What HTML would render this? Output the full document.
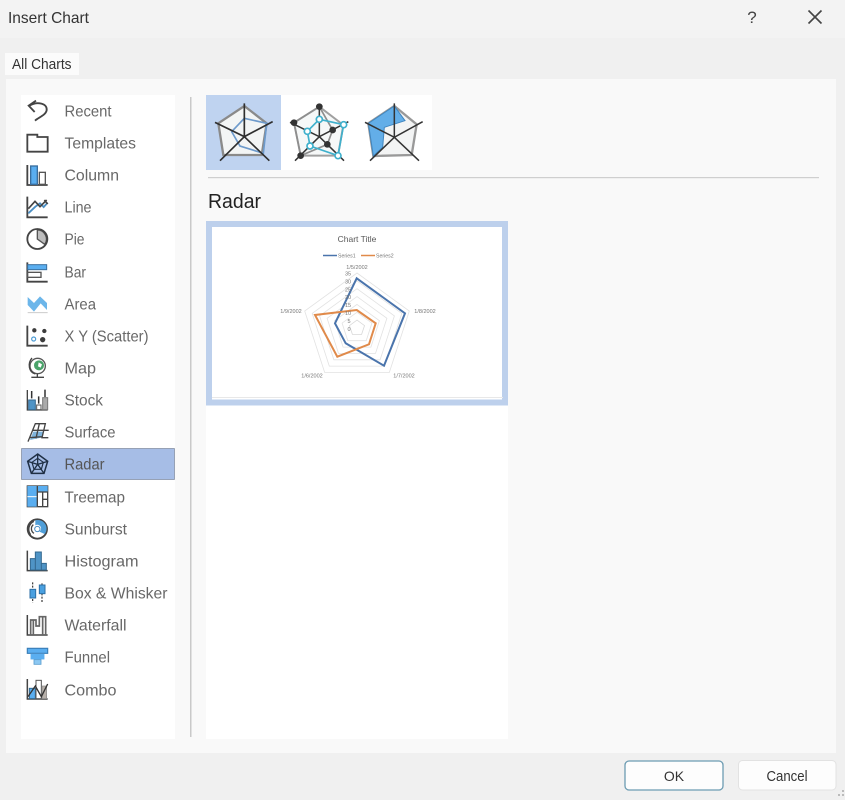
<!DOCTYPE html>
<html><head><meta charset="utf-8"><title>Insert Chart</title>
<style>
html,body{margin:0;padding:0;background:#f0f0f0;width:845px;height:800px;overflow:hidden}
svg{display:block;filter:blur(.3px)}
text{font-family:"Liberation Sans",sans-serif}
.l{font-size:16px;fill:#686868}
.i{fill:none;stroke:#444;stroke-width:5.500}
.c{font-size:5.500px;fill:#777}
</style></head><body>
<svg width="845" height="800" viewBox="0 0 845 800" xmlns="http://www.w3.org/2000/svg">
<rect width="845" height="800" fill="#f0f0f0"/>
<rect width="845" height="38" fill="#f3f3f3"/>
<text x="8" y="23" font-size="16" fill="#333" textLength="81" lengthAdjust="spacingAndGlyphs">Insert Chart</text>
<text x="752" y="23" font-size="17" fill="#444" text-anchor="middle">?</text>
<path d="M808.500 10.500 L821.500 23.500 M821.500 10.500 L808.500 23.500" stroke="#444" stroke-width="1.600" fill="none"/>
<rect x="6" y="79" width="830" height="674" fill="#f9f9f9"/>
<rect x="5" y="53" width="74" height="22" fill="#fbfbfb"/>
<text x="12" y="69" font-size="14.500" fill="#333" textLength="59.500" lengthAdjust="spacingAndGlyphs">All Charts</text>
<rect x="21" y="95" width="154" height="644" fill="#fff"/>
<rect x="21.500" y="448.500" width="153" height="31" fill="#a6bde6" stroke="#5a6478" stroke-width="1" stroke-dasharray="1 1"/>
<rect x="190" y="97" width="1.500" height="640" fill="#c9c9c9"/>

<g transform="translate(-.5 -.7)">
<text class="l" x="65" y="117" textLength="47" lengthAdjust="spacingAndGlyphs">Recent</text>
<text class="l" x="65" y="149" textLength="71.500" lengthAdjust="spacingAndGlyphs">Templates</text>
<text class="l" x="65" y="181" textLength="54.500" lengthAdjust="spacingAndGlyphs">Column</text>
<text class="l" x="65" y="213" textLength="27" lengthAdjust="spacingAndGlyphs">Line</text>
<text class="l" x="65" y="245" textLength="20" lengthAdjust="spacingAndGlyphs">Pie</text>
<text class="l" x="65" y="278" textLength="21.500" lengthAdjust="spacingAndGlyphs">Bar</text>
<text class="l" x="65" y="310" textLength="31.500" lengthAdjust="spacingAndGlyphs">Area</text>
<text class="l" x="65" y="342" textLength="84" lengthAdjust="spacingAndGlyphs">X Y (Scatter)</text>
<text class="l" x="65" y="374" textLength="31.500" lengthAdjust="spacingAndGlyphs">Map</text>
<text class="l" x="65" y="406" textLength="38.500" lengthAdjust="spacingAndGlyphs">Stock</text>
<text class="l" x="65" y="438" textLength="51" lengthAdjust="spacingAndGlyphs">Surface</text>
<text class="l" x="65" y="470" textLength="40" lengthAdjust="spacingAndGlyphs" style="fill:#555">Radar</text>
<text class="l" x="65" y="503" textLength="60.500" lengthAdjust="spacingAndGlyphs">Treemap</text>
<text class="l" x="65" y="535" textLength="62.500" lengthAdjust="spacingAndGlyphs">Sunburst</text>
<text class="l" x="65" y="567" textLength="74" lengthAdjust="spacingAndGlyphs">Histogram</text>
<text class="l" x="65" y="599" textLength="103" lengthAdjust="spacingAndGlyphs">Box &amp; Whisker</text>
<text class="l" x="65" y="631" textLength="62" lengthAdjust="spacingAndGlyphs">Waterfall</text>
<text class="l" x="65" y="663" textLength="45.500" lengthAdjust="spacingAndGlyphs">Funnel</text>
<text class="l" x="65" y="696" textLength="52" lengthAdjust="spacingAndGlyphs">Combo</text>
</g>

<!-- icons, group 1 -->
<g transform="scale(.33333)">
<path class="i" d="M108 302 L86 317 L104 336 M88 317 C112 303 143 310 140 331 C137 346 116 352 105 362"/>
<path class="i" d="M82 404 H112 V411 H143 V455 H82 Z"/>
<path class="i" d="M82 495 V555 H143"/>
<rect x="92" y="498" width="20" height="55" fill="#5aaef0" stroke="#3a6f9f" stroke-width="4"/>
<rect x="118" y="517" width="18" height="36" fill="#fff" stroke="#555" stroke-width="4"/>
<path class="i" d="M82 590 V652 H143"/>
<path d="M85 640 L106 620 L120 610 L131 621 L143 608" fill="none" stroke="#4b8fc4" stroke-width="5.500"/>
<path d="M85 626 L105 604 L120 620 L140 600 M133 600 L143 612" fill="none" stroke="#444" stroke-width="5"/>
<path d="M112 717 V690 A27 27 0 0 1 134 733 Z" fill="#bdbdbd" stroke="#555" stroke-width="4"/>
<circle class="i" cx="112" cy="717" r="30"/>
</g>
<!-- icons, group 2 -->
<g transform="translate(0 255) scale(.33333)">
<path class="i" d="M82 22 V80 H143"/>
<rect x="83" y="29" width="57" height="15" fill="#5aaef0" stroke="#3a6f9f" stroke-width="3"/>
<rect x="83" y="52" width="40" height="15" fill="#fff" stroke="#555" stroke-width="4"/>
<polygon points="83,126 102,144 120,124 141,144 141,165 122,145 102,170 83,150" fill="#6cb6ea"/>
<path d="M83 173 H143" stroke="#ccc" stroke-width="3"/>
<path class="i" d="M82 212 V272 H143"/>
<circle cx="103" cy="226" r="6.500" fill="#3c3c3c"/><circle cx="133" cy="228" r="6.500" fill="#3c3c3c"/><circle cx="128" cy="254" r="8" fill="#3c3c3c"/>
<circle cx="101" cy="252" r="6" fill="#fff" stroke="#4b9bd4" stroke-width="3.500"/>
<circle cx="113" cy="333" r="23" fill="#fff" stroke="#555" stroke-width="4"/>
<circle cx="117" cy="331" r="15" fill="#4aa36a"/>
<path d="M116 322 L126 328 L122 338 L114 334 Z" fill="#fff"/>
<path d="M96 309 C82 325 86 352 106 357 M112 357 V366 M94 367 H132" fill="none" stroke="#444" stroke-width="4"/>
<path d="M82 405 V465 H143" fill="none" stroke="#444" stroke-width="4"/>
<rect x="86" y="435" width="20" height="29" fill="#4f94c6" stroke="#33688f" stroke-width="3"/>
<rect x="110" y="450" width="13" height="14" fill="#fff" stroke="#555" stroke-width="3"/>
<rect x="128" y="428" width="15" height="36" fill="#aaa" stroke="#777" stroke-width="3"/>
<path d="M95 408 V430 M116 424 V446 M135 404 V426" stroke="#333" stroke-width="4.500"/>
<polygon points="100,530 132,530 124,548 90,555" fill="#7fb4dc"/>
<path d="M84 560 L106 506 H136 L126 548 H145 M88 548 L126 545 M98 526 H146 M118 506 L108 550" fill="none" stroke="#444" stroke-width="4"/>
<g fill="none" stroke="#1f2f44">
<polygon points="113,597 143,619 132,655 94,655 83,619" stroke-width="4.500"/>
<polygon points="113,610 130,622 124,643 102,643 96,622" stroke-width="3.500"/>
<path d="M113 597 V628 L143 619 M113 628 L132 655 M113 628 L94 655 M113 628 L83 619" stroke-width="4"/>
</g>
</g>
<!-- icons, group 3 -->
<g transform="translate(0 480) scale(.33333)">
<rect x="82" y="18" width="61" height="62" fill="#fff" stroke="#444" stroke-width="4"/>
<rect x="82" y="18" width="30" height="62" fill="#5aaef0"/>
<rect x="112" y="18" width="31" height="17" fill="#5aaef0"/>
<path d="M82 50 H112" stroke="#fff" stroke-width="3"/>
<path d="M112 18 V80 M112 36 H143 M128 36 V80 M128 58 H143" stroke="#444" stroke-width="4"/>
<circle cx="112" cy="147" r="29" fill="#fff" stroke="#444" stroke-width="5.500"/>
<path d="M106 121 A26 26 0 0 1 134 162 L118 155 A11 11 0 0 0 106 136 Z" fill="#4f9ed8"/>
<path d="M92 164 A26 26 0 0 1 102 124 M102 160 A16 16 0 0 1 100 134" fill="none" stroke="#444" stroke-width="4"/>
<circle cx="112" cy="147" r="8" fill="#fff" stroke="#4b8fc4" stroke-width="3"/>
<path d="M82 212 V272 H143" fill="none" stroke="#444" stroke-width="4.500"/>
<path d="M91 270 V236 H106 V216 H124 V250 H139 V270 Z" fill="#4f94c6" stroke="#33688f" stroke-width="3"/>
<path d="M106 236 V270 M124 250 V270" stroke="#33688f" stroke-width="3"/>
<path d="M98 307 V368 M126 310 V366" stroke="#333" stroke-width="3.500" stroke-dasharray="6 4"/>
<rect x="90" y="328" width="17" height="26" fill="#4aa0e0" stroke="#2c6fa5" stroke-width="3"/>
<rect x="118" y="315" width="17" height="26" fill="#4aa0e0" stroke="#2c6fa5" stroke-width="3"/>
<path d="M82 405 V465 H143" fill="none" stroke="#444" stroke-width="4.500"/>
<path d="M92 465 V420 H108 V438 H118 V410 H137 V465 M100 420 V465 M128 410 V465" fill="none" stroke="#666" stroke-width="5"/>
<rect x="82" y="505" width="61" height="15" fill="#5aaef0" stroke="#3a7fb8" stroke-width="3.500"/>
<rect x="92" y="522" width="41" height="16" fill="#5aaef0" stroke="#5aaef0" stroke-width="1"/>
<rect x="102" y="539" width="21" height="14" fill="#8cc8f2" stroke="#5a9fd0" stroke-width="2.500"/>
<path d="M82 597 V657 H143" fill="none" stroke="#444" stroke-width="4.500"/>
<rect x="88" y="625" width="18" height="31" fill="#5aaef0" stroke="#33688f" stroke-width="3"/>
<rect x="108" y="601" width="16" height="55" fill="#fff" stroke="#555" stroke-width="3"/>
<rect x="126" y="618" width="14" height="38" fill="#b7b0aa" stroke="#888" stroke-width="2"/>
<path d="M84 650 L106 618 L124 650 L143 612" fill="none" stroke="#333" stroke-width="4"/>
</g>

<!-- chart type thumbnails -->
<rect x="206" y="95" width="226" height="75" fill="#fff"/>
<rect x="206" y="95" width="75" height="75" fill="#bfd3f0"/>
<rect x="208" y="177" width="611" height="1.200" fill="#cfcfcf"/>
<g transform="translate(200 90) scale(.33333)">
<polygon points="133,48 200,100 185,195 70,195 55,100" fill="#f3f5f5" stroke="#8a8a8a" stroke-width="7"/>
<polygon points="133,85 200,100 190,190 120,168 95,125" fill="none" stroke="#6d9acb" stroke-width="5"/>
<path d="M133 40 V140 M45 97 L133 140 L218 95 M60 212 L133 140 L208 212" fill="none" stroke="#2f2f2f" stroke-width="5"/>
<polygon points="358,50 430,105 414,197 302,197 282,98" fill="#f6f8f8" stroke="#a0a0a0" stroke-width="6"/>
<polygon points="358,50 398,120 382,163 302,197 282,98" fill="none" stroke="#8e8e8e" stroke-width="5"/>
<polygon points="358,88 431,104 414,197 330,168 322,124" fill="none" stroke="#3fb0cc" stroke-width="5"/>
<path d="M358 45 V140 M270 97 L358 140 L445 95 M285 212 L358 140 L432 212" fill="none" stroke="#333" stroke-width="4.500"/>
<g fill="#333"><circle cx="358" cy="50" r="10"/><circle cx="398" cy="120" r="10"/><circle cx="382" cy="163" r="10"/><circle cx="302" cy="197" r="10"/><circle cx="282" cy="98" r="10"/></g>
<g fill="#fff" stroke="#3fb0cc" stroke-width="5"><circle cx="358" cy="88" r="9"/><circle cx="431" cy="104" r="9"/><circle cx="414" cy="197" r="9"/><circle cx="330" cy="168" r="9"/><circle cx="322" cy="124" r="9"/></g>
<polygon points="583,48 650,103 635,195 520,198 505,100" fill="#f3f4f4" stroke="#999" stroke-width="7"/>
<polygon points="583,48 615,92 553,112 548,172 520,198 505,100" fill="#63aee8" stroke="#3f85bf" stroke-width="3"/>
<path d="M583 40 V142 M495 97 L583 142 L668 95 M510 212 L583 142 L657 212" fill="none" stroke="#333" stroke-width="4.500"/>
</g>
<text x="208" y="208" font-size="20" fill="#222" textLength="53" lengthAdjust="spacingAndGlyphs">Radar</text>

<!-- preview -->
<rect x="206" y="221" width="302" height="518" fill="#fff"/>
<rect x="209" y="224" width="296" height="178.500" fill="#fff" stroke="#bdd0ec" stroke-width="6"/>
<path d="M212 397.500 H503" stroke="#e8e8e8" stroke-width="1"/>
<text x="357" y="242" font-size="8.500" fill="#595959" text-anchor="middle">Chart Title</text>
<path d="M323 255.500 H337" stroke="#4a74ac" stroke-width="1.500"/><text x="338" y="257.500" class="c" style="font-size:5.200px">Series1</text>
<path d="M361 255.500 H375" stroke="#e08a4a" stroke-width="1.500"/><text x="376" y="257.500" class="c" style="font-size:5.200px">Series2</text>
<g fill="none" stroke="#e2e2e2" stroke-width=".800" transform="translate(357 328)">
<polygon points="0,-7.900 7.500,-2.400 4.600,6.400 -4.600,6.400 -7.500,-2.400" stroke="#d8d8d8"/>
<polygon points="0,-15.700 14.900,-4.900 9.200,12.700 -9.200,12.700 -14.900,-4.900"/>
<polygon points="0,-23.600 22.400,-7.300 13.900,19.100 -13.900,19.100 -22.400,-7.300"/>
<polygon points="0,-31.400 29.900,-9.700 18.500,25.400 -18.500,25.400 -29.900,-9.700"/>
<polygon points="0,-39.300 37.400,-12.100 23.100,31.800 -23.100,31.800 -37.400,-12.100"/>
<polygon points="0,-47.100 44.800,-14.600 27.700,38.100 -27.700,38.100 -44.800,-14.600"/>
<polygon points="0,-55 52.300,-17 32.300,44.500 -32.300,44.500 -52.300,-17"/>
</g>
<polygon points="356.700,278.300 405,313.300 384,365.700 345.700,343.300 335,323.300" fill="none" stroke="#4a74ac" stroke-width="2"/>
<polygon points="356.700,310 375.700,323.300 369,344.300 337.300,356.700 315,315" fill="none" stroke="#e08a4a" stroke-width="2"/>
<g text-anchor="middle">
<text class="c" x="357" y="269">1/5/2002</text>
<text class="c" x="425" y="313">1/8/2002</text>
<text class="c" x="404" y="377.500">1/7/2002</text>
<text class="c" x="312" y="377.500">1/6/2002</text>
<text class="c" x="291" y="313">1/9/2002</text>
<text class="c" x="348" y="275.500">35</text>
<text class="c" x="348" y="283.500">30</text>
<text class="c" x="348" y="291.500">25</text>
<text class="c" x="348" y="299">20</text>
<text class="c" x="348" y="307">15</text>
<text class="c" x="348" y="315">10</text>
<text class="c" x="349" y="323">5</text>
<text class="c" x="349" y="331">0</text>
</g>

<!-- buttons -->
<rect x="625" y="761" width="98" height="29" rx="4" fill="#fdfdfd" stroke="#6d9cb2" stroke-width="1.300"/>
<text x="674" y="781" font-size="14" fill="#333" text-anchor="middle">OK</text>
<rect x="738.500" y="760.500" width="97.500" height="29.500" rx="4" fill="#fdfdfd" stroke="#e2e2e2" stroke-width="1"/>
<text x="787" y="781" font-size="15" fill="#333" text-anchor="middle" textLength="41" lengthAdjust="spacingAndGlyphs">Cancel</text>
<g fill="#bbb"><rect x="842" y="790" width="2" height="2"/><rect x="842" y="794" width="2" height="2"/><rect x="838" y="794" width="2" height="2"/></g>
</svg>
</body></html>
